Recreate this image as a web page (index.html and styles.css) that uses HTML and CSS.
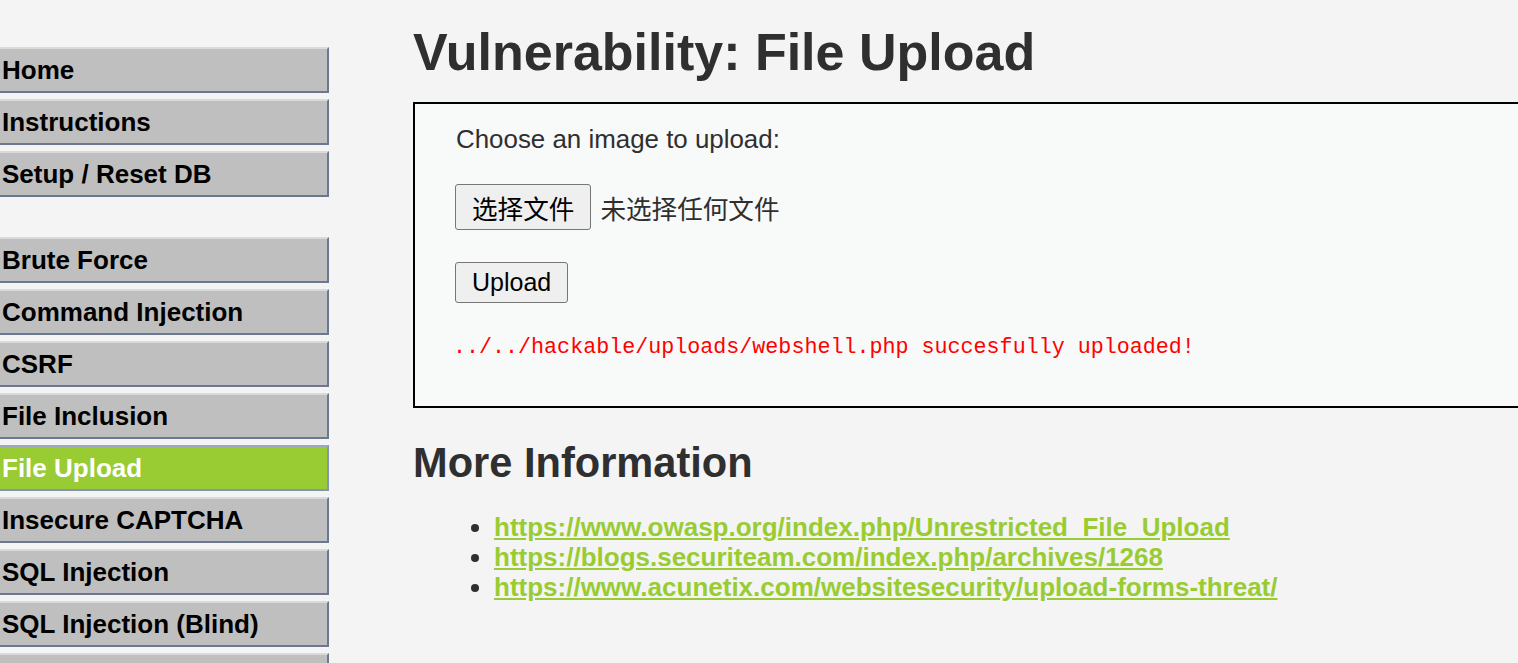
FILE: index.html
```html
<!DOCTYPE html>
<html lang="en">
<head>
<meta charset="utf-8">
<title>Vulnerability: File Upload</title>
<link rel="stylesheet" href="styles.css">
</head>
<body>
<div class="page">
  <nav class="sidebar">
    <ul class="menu">
      <li class="item">Home</li>
      <li class="item">Instructions</li>
      <li class="item">Setup / Reset DB</li>
    </ul>
    <ul class="menu menu-gap">
      <li class="item">Brute Force</li>
      <li class="item">Command Injection</li>
      <li class="item">CSRF</li>
      <li class="item">File Inclusion</li>
      <li class="item selected">File Upload</li>
      <li class="item">Insecure CAPTCHA</li>
      <li class="item">SQL Injection</li>
      <li class="item">SQL Injection (Blind)</li>
      <li class="item">Weak Session IDs</li>
    </ul>
  </nav>
  <main class="main">
    <h1 class="title">Vulnerability: File Upload</h1>
    <div class="code-area">
      <p class="label">Choose an image to upload:</p>
      <div class="file-row">
        <button class="btn btn-file" type="button">选择文件</button>
        <span class="file-status">未选择任何文件</span>
      </div>
      <div class="upload-row">
        <button class="btn btn-upload" type="button">Upload</button>
      </div>
      <pre class="message">../../hackable/uploads/webshell.php succesfully uploaded!</pre>
    </div>
    <h2 class="subtitle">More Information</h2>
    <ul class="links">
      <li><a href="#">https://www.owasp.org/index.php/Unrestricted_File_Upload</a></li>
      <li><a href="#">https://blogs.securiteam.com/index.php/archives/1268</a></li>
      <li><a href="#">https://www.acunetix.com/websitesecurity/upload-forms-threat/</a></li>
    </ul>
  </main>
</div>
</body>
</html>
```

FILE: styles.css
```css
html, body {
  margin: 0;
  padding: 0;
  overflow: hidden;
  background: #f4f4f4;
  height: 663px;
}

body {
  font-family: "Liberation Sans", Arial, sans-serif;
  color: #2f2f2f;
}

.page {
  display: flex;
  align-items: flex-start;
}

.sidebar {
  width: 329px;
  flex-shrink: 0;
  padding-top: 47px;
}

.menu {
  list-style: none;
  margin: 0;
  padding: 0;
  display: flex;
  flex-direction: column;
  gap: 6px;
}

.menu-gap {
  margin-top: 40px;
}

.item {
  box-sizing: border-box;
  height: 46px;
  display: flex;
  align-items: center;
  padding-left: 2px;
  background: #bfbfbf;
  border-top: 2px solid #dadada;
  border-right: 2px solid #6c7890;
  border-bottom: 2px solid #6c7890;
  font-weight: bold;
  font-size: 26px;
  color: #000;
}

.item.selected {
  background: #99cc33;
  color: #fff;
  border-top: 2px solid #9aa8c0;
  border-right: 2px solid #8494b4;
  border-bottom: 2px solid #8494b4;
}

.main {
  margin-left: 84px;
  width: 1200px;
  flex-shrink: 0;
}

.title {
  margin: 22px 0 20px;
  font-size: 52px;
  font-weight: bold;
  color: #2f2f2f;
}

.code-area {
  border: 2px solid #000;
  background: #f8f9f9;
  padding: 20px 40px 43px;
  display: flex;
  flex-direction: column;
  align-items: flex-start;
}

.label {
  margin: 0 0 0 1px;
  font-size: 25.9px;
  line-height: 30px;
  color: #2f2f2f;
}

.file-row {
  margin-top: 30px;
  display: flex;
  align-items: center;
  gap: 9px;
}

.btn {
  box-sizing: border-box;
  background: #efefef;
  border: 1px solid #767676;
  border-radius: 3px;
  color: #000;
  padding: 0 16px;
  margin: 0;
  display: flex;
  align-items: center;
  justify-content: center;
}

.btn-file {
  height: 46px;
  font-family: "Noto Sans CJK SC", sans-serif;
  font-size: 25.6px;
}

.file-status {
  font-family: "Noto Sans CJK SC", sans-serif;
  font-size: 25.6px;
  color: #2f2f2f;
}

.upload-row {
  margin-top: 32px;
}

.btn-upload {
  height: 41px;
  font-family: "Liberation Sans", Arial, sans-serif;
  font-size: 25px;
}

.message {
  margin: 30px 0 0 -2px;
  font-family: "Liberation Mono", monospace;
  font-size: 21.7px;
  line-height: 30px;
  color: #ff0000;
}

.subtitle {
  margin: 31px 0 25px;
  font-size: 41.6px;
  font-weight: bold;
  color: #2f2f2f;
}

.links {
  margin: 0;
  padding-left: 81px;
  color: #2f2f2f;
  font-size: 26px;
  line-height: 30px;
}

.links a {
  color: #99cc33;
  font-weight: bold;
  text-decoration: underline;
}
```
